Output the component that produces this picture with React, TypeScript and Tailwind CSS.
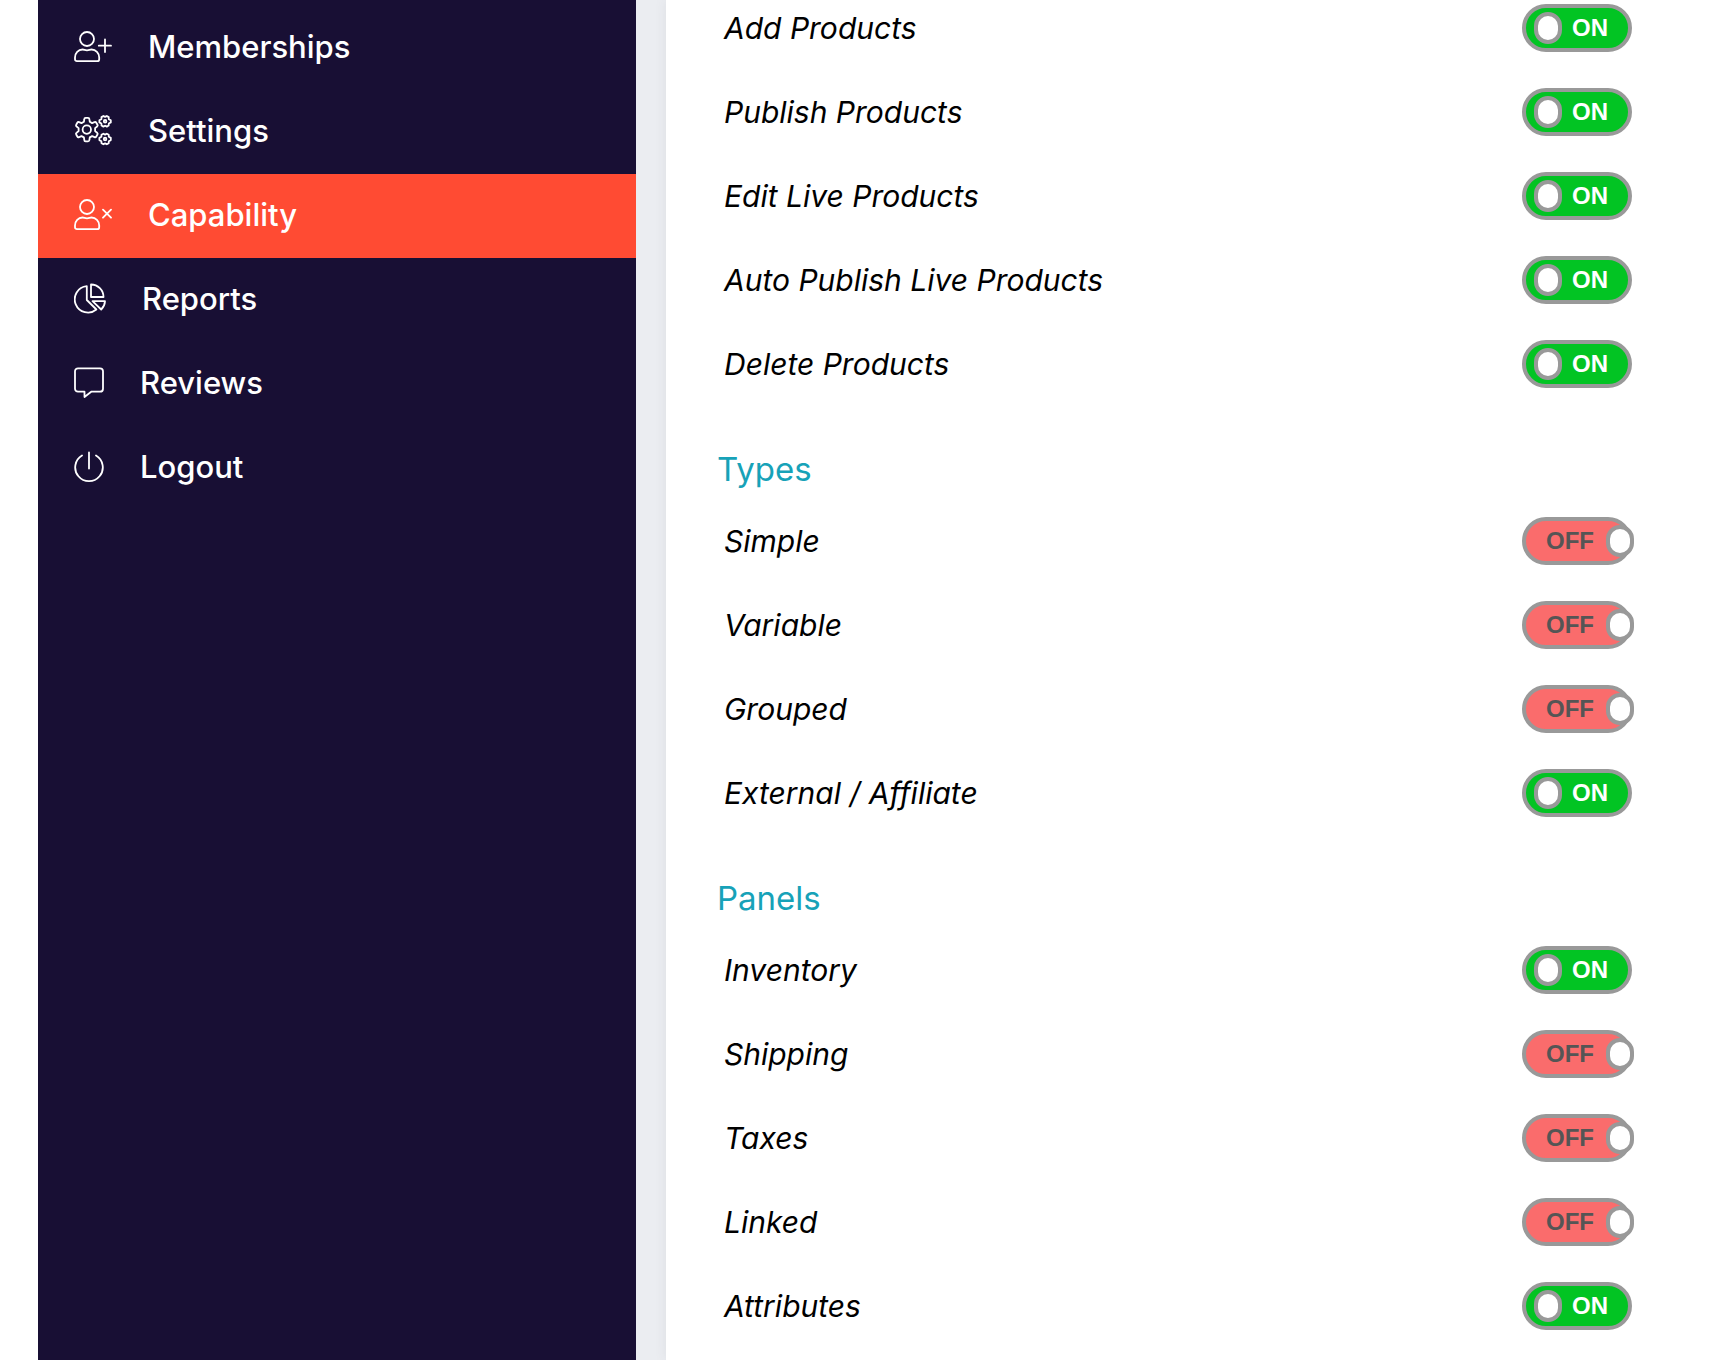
import React, { useState } from 'react';

const iconProps = {
    fill: 'none',
    stroke: 'currentColor',
    strokeWidth: 1.8,
    strokeLinecap: 'round' as const,
    strokeLinejoin: 'round' as const,
    'aria-hidden': true,
};

const UserShape = () => (
    <>
        <circle cx="13" cy="8" r="7" />
        <path d="M1 26.500c0-4.600 3.300-8 7.500-8 1.700 0 2.400.8 4.500.8s2.800-.8 4.500-.8c4.300 0 7.700 3.400 7.700 8v1.700c0 1.200-.8 2-2 2H3c-1.200 0-2-.8-2-2z" />
    </>
);

const IconUserPlus = () => (
    <svg className="w-[38px] h-8" viewBox="0 0 38 32" {...iconProps}>
        <UserShape />
        <path d="M31 8.500v12.500M24.800 14.700h12.200" />
    </svg>
);

const IconUserTimes = () => (
    <svg className="w-[38px] h-8" viewBox="0 0 38 32" {...iconProps}>
        <UserShape />
        <path d="M29 10.700l8 8M37 10.700l-8 8" />
    </svg>
);

const IconCogs = () => (
    <svg className="w-[38px] h-8" viewBox="0 0 38 32" {...iconProps}>
        <path d="M10.300 4.200c0-.9.500-1.300 1.300-1.300h2.400c.8 0 1.300.4 1.400 1.300l.4 2.600 2.300 1.300 2.400-1c.8-.3 1.400-.1 1.800.6l1.200 2c.4.7.2 1.300-.4 1.800l-2 1.600v3l2 1.600c.6.500.8 1.100.4 1.800l-1.200 2c-.4.700-1 .9-1.800.6l-2.400-1-2.300 1.300-.4 2.600c-.1.900-.6 1.300-1.400 1.300h-2.400c-.8 0-1.300-.4-1.300-1.300l-.4-2.600-2.400-1.300-2.400 1c-.8.3-1.400.1-1.800-.6l-1.100-2c-.4-.7-.3-1.300.4-1.800l2-1.600v-3l-2-1.600c-.7-.5-.8-1.100-.4-1.800l1.100-2c.4-.7 1-.9 1.800-.6l2.400 1 2.400-1.300z" />
        <circle cx="12.800" cy="14.600" r="4.200" />
        <path d="M29.400 1l1.700.9 1.700-.9 1.900 1.100.1 2 2 1.100v2.200l-2 1.100-.1 2-1.900 1.100-1.700-.9-1.700.9-1.900-1.100-.1-2-2-1.100V5.200l2-1.100.1-2z" />
        <circle cx="31.100" cy="6.300" r="1.300" />
        <path d="M29.400 18.700l1.700.9 1.700-.9 1.900 1.100.1 2 2 1.100v2.200l-2 1.100-.1 2-1.900 1.100-1.700-.9-1.700.9-1.900-1.100-.1-2-2-1.100v-2.200l2-1.100.1-2z" />
        <circle cx="31.100" cy="24" r="1.300" />
    </svg>
);

const IconPie = () => (
    <svg className="w-8 h-8" viewBox="0 0 32 32" {...iconProps}>
        <path d="M12.800 3.200A13.200 13.200 0 1 0 22.400 26.500L12.800 17z" />
        <path d="M17 1.500a12.500 12.500 0 0 1 12.500 12.500H17z" />
        <path d="M18.500 18.200h12.500a12.500 12.500 0 0 1-3.800 8.300z" />
    </svg>
);

const IconComment = () => (
    <svg className="w-[30px] h-8" viewBox="0 0 30 32" {...iconProps}>
        <path d="M4 1.300h22a3 3 0 0 1 3 3v17.400a3 3 0 0 1-3 3h-8.800L10.500 30v-5.300H4a3 3 0 0 1-3-3V4.300a3 3 0 0 1 3-3z" />
    </svg>
);

const IconPower = () => (
    <svg className="w-[30px] h-8" viewBox="0 0 30 32" {...iconProps}>
        <path d="M15 1.500v16M8 4.500a13.800 13.800 0 1 0 14 0" />
    </svg>
);

const menu = [
    { label: 'Memberships', Icon: IconUserPlus },
    { label: 'Settings', Icon: IconCogs },
    { label: 'Capability', Icon: IconUserTimes, active: true },
    { label: 'Reports', Icon: IconPie },
    { label: 'Reviews', Icon: IconComment },
    { label: 'Logout', Icon: IconPower },
];

const sections = [
    {
        title: '',
        items: [
            { label: 'Add Products', on: true },
            { label: 'Publish Products', on: true },
            { label: 'Edit Live Products', on: true },
            { label: 'Auto Publish Live Products', on: true },
            { label: 'Delete Products', on: true },
        ],
    },
    {
        title: 'Types',
        items: [
            { label: 'Simple', on: false },
            { label: 'Variable', on: false },
            { label: 'Grouped', on: false },
            { label: 'External / Affiliate', on: true },
        ],
    },
    {
        title: 'Panels',
        items: [
            { label: 'Inventory', on: true },
            { label: 'Shipping', on: false },
            { label: 'Taxes', on: false },
            { label: 'Linked', on: false },
            { label: 'Attributes', on: true },
        ],
    },
];

const CapabilityRow = ({ label, on }: { label: string; on: boolean }) => {
    const [checked, setChecked] = useState(on);

    return (
        <label className="flex items-center justify-between h-[84px] pl-[7px] cursor-pointer">
            <span className="italic text-[30px] leading-10 text-black">{label}</span>
            <span
                className={`relative flex items-center w-[110px] h-12 rounded-full border-4 border-[#999999] font-['Liberation_Sans',Arial,sans-serif] font-bold text-2xl ${
                    checked ? 'bg-[#02c423] text-white pl-[46px]' : 'bg-[#fa6c6c] text-[#555555] pl-5'
                }`}
            >
                <input
                    type="checkbox"
                    role="switch"
                    className="sr-only"
                    checked={checked}
                    onChange={e => setChecked(e.target.checked)}
                />
                {checked ? 'ON' : 'OFF'}
                <span
                    className={`absolute top-1 w-7 h-8 rounded-full border-4 border-[#999999] bg-white ${
                        checked ? 'left-2' : '-right-1.5'
                    }`}
                />
            </span>
        </label>
    );
};

const App = () => {
    return (
        <div className="flex min-h-screen pl-[38px] bg-white font-['Inter',sans-serif]">
            <nav className="w-[598px] shrink-0 bg-[#180f34] pt-1.5 text-white">
                {menu.map(({ label, Icon, active }) => (
                    <a
                        key={label}
                        href="#"
                        className={`flex items-center gap-9 h-[84px] pl-9 pb-0.5 text-[31px] leading-10 font-medium ${active ? 'bg-[#ff4b33]' : ''}`}
                    >
                        <Icon />
                        {label}
                    </a>
                ))}
            </nav>
            <div className="flex-1 flex pl-[30px] bg-[#ebedf1] overflow-hidden">
                <main className="flex-1 bg-white shadow-[0_0_12px_rgba(69,65,78,0.08)] pl-[51px] pr-[90px]">
                    {/* list is scrolled, the first row starts just above the top edge */}
                    <div className="-mt-3.5">
                        {sections.map(section => (
                            <section key={section.title}>
                                {section.title && (
                                    <h2 className="pt-[41px] pb-2 text-[33px] leading-11 text-[#17a2b8]">{section.title}</h2>
                                )}
                                {section.items.map(item => (
                                    <CapabilityRow key={item.label} label={item.label} on={item.on} />
                                ))}
                            </section>
                        ))}
                    </div>
                </main>
            </div>
        </div>
    );
};

export default App;
